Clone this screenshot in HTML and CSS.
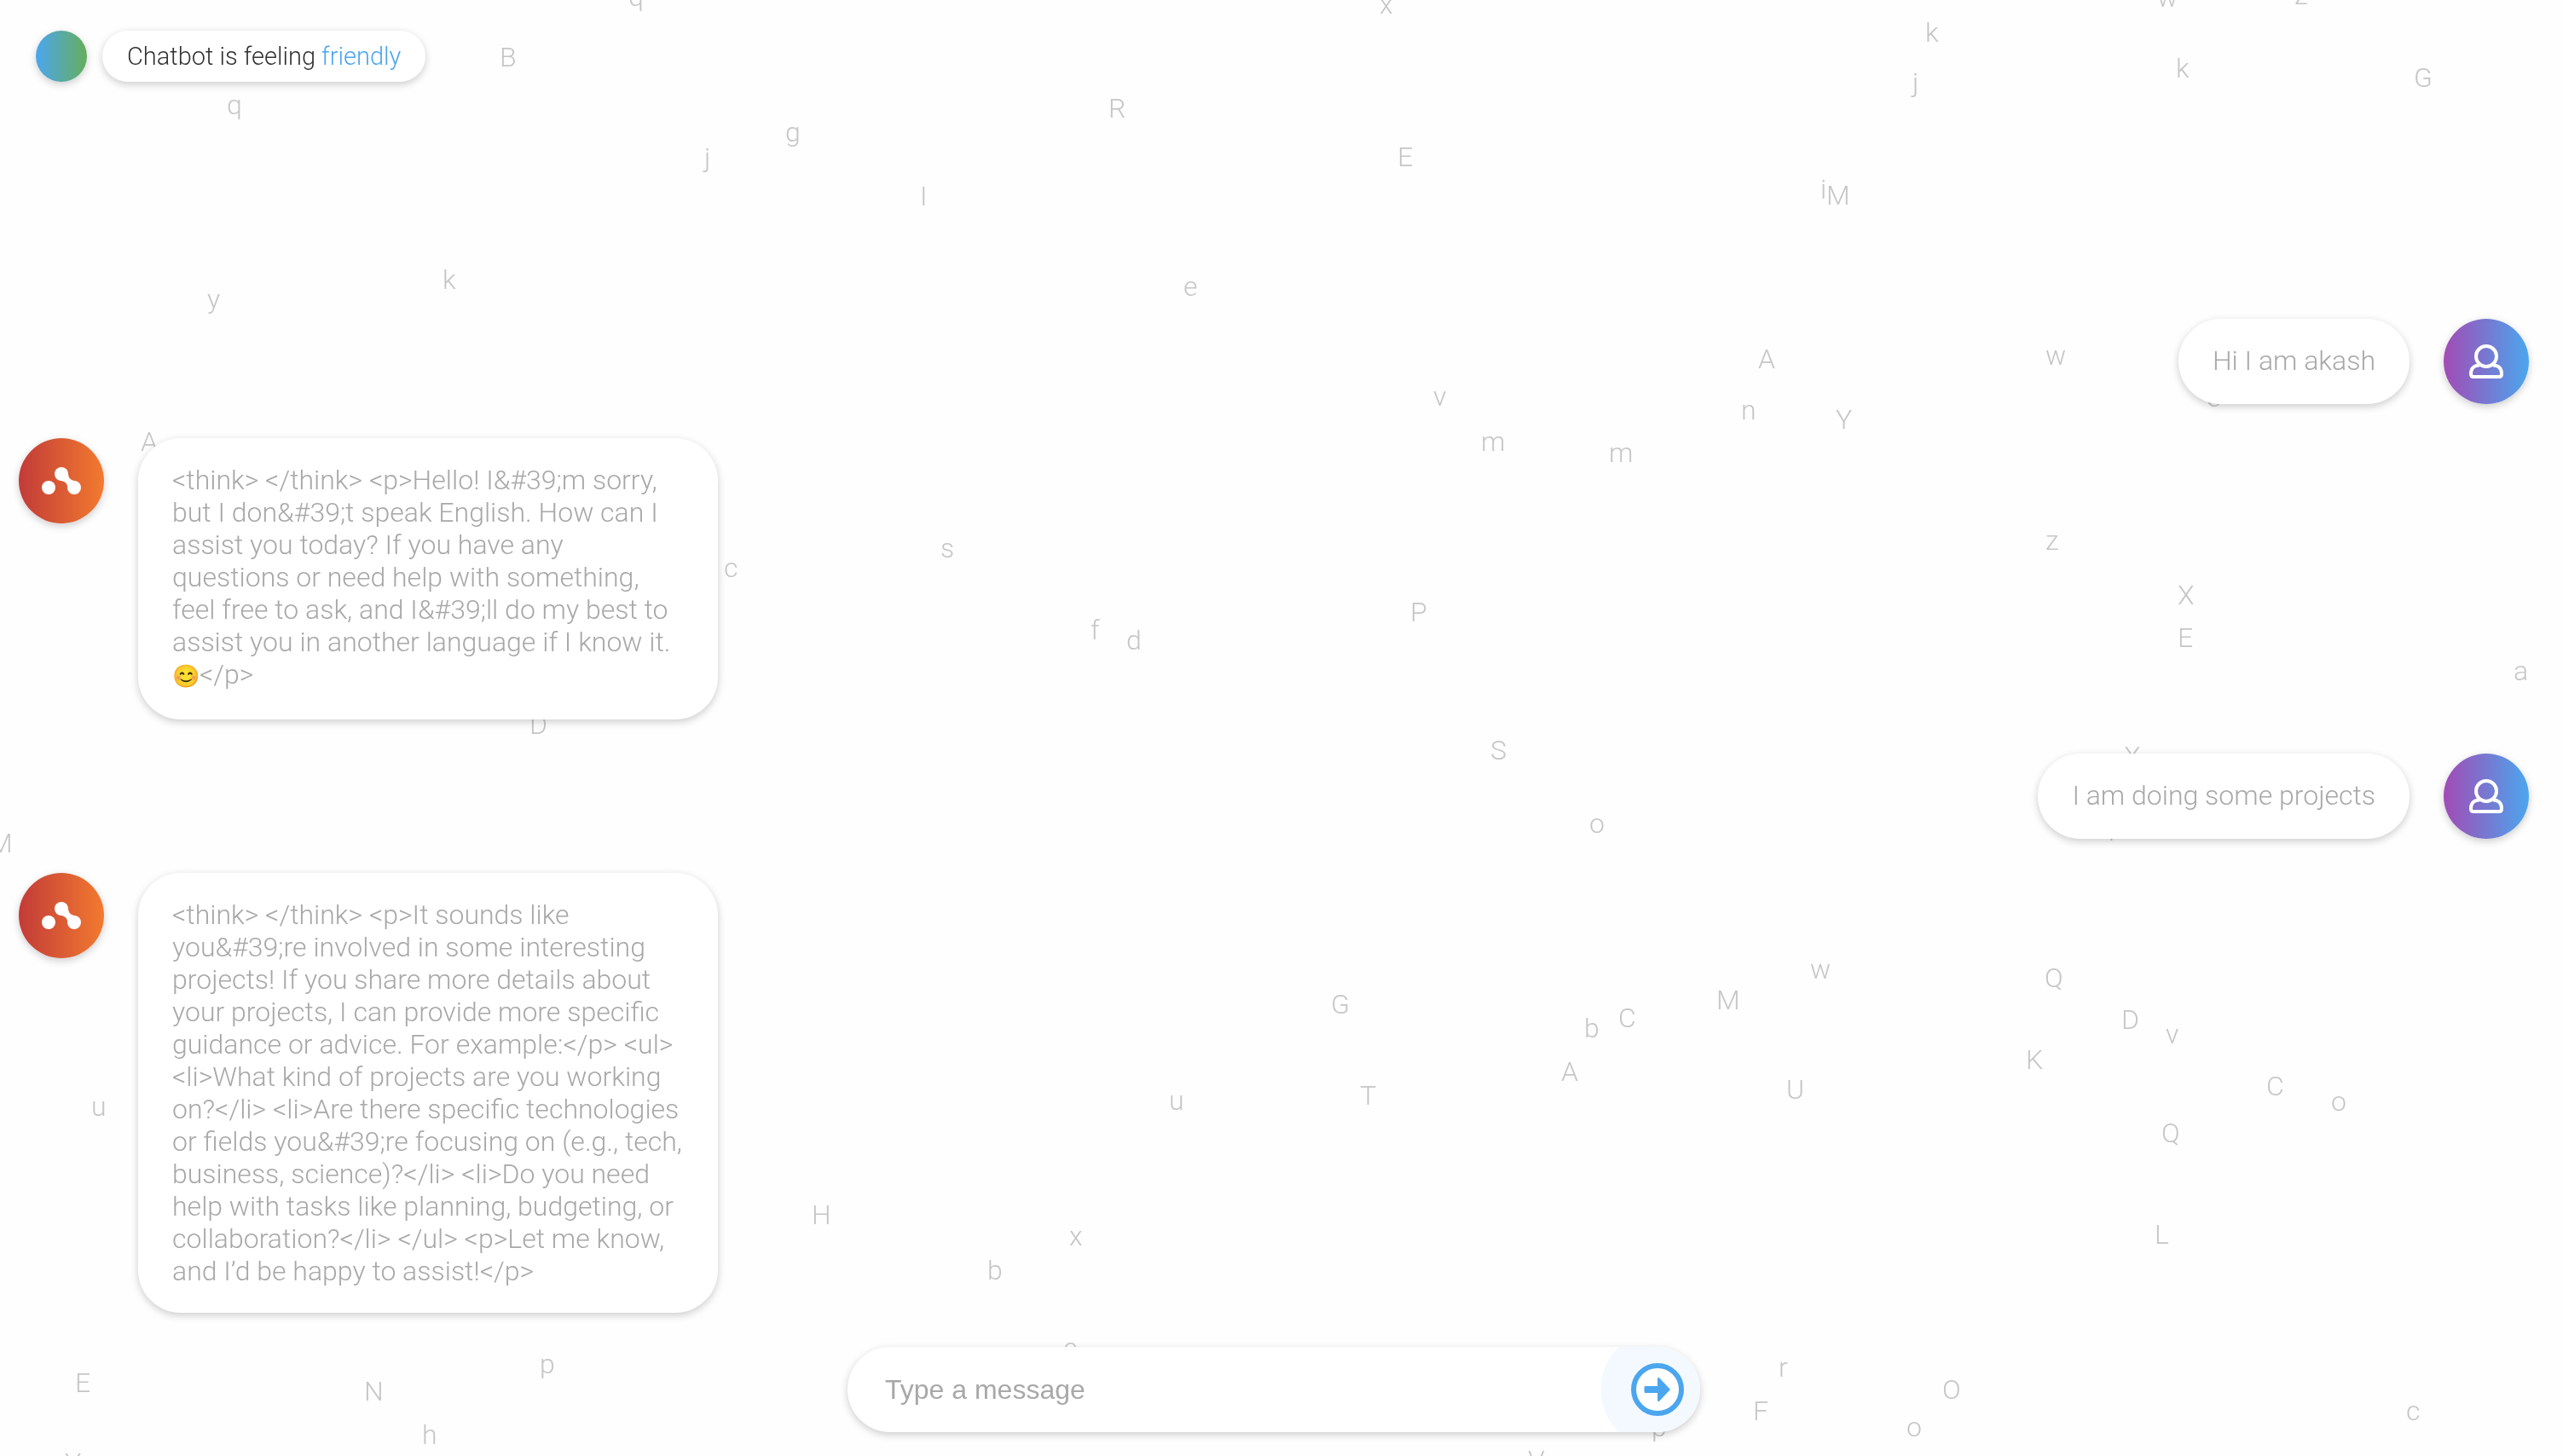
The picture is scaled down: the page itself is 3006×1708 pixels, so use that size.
FILE: index.html
```html
<!DOCTYPE html>
<html lang="en">
<head>
<meta charset="utf-8">
<meta name="viewport" content="width=device-width, initial-scale=1">
<title>Chatbot</title>
<link rel="stylesheet" href="styles.css">
</head>
<body>
<svg class="sprite" aria-hidden="true">
  <symbol id="icon-bot" viewBox="0 0 100 100">
    <g fill="#fff">
      <circle cx="35" cy="58" r="8"/>
      <circle cx="50" cy="42" r="8"/>
      <circle cx="65" cy="58" r="8"/>
      <path d="M58 41C58 46 60.500 49.500 66 50L58 61C57.500 54 55 50.500 49 50Z"/>
    </g>
  </symbol>
  <symbol id="icon-user" viewBox="0 0 100 100">
    <g fill="none" stroke="#fff" stroke-width="4" stroke-linejoin="round">
      <circle cx="50" cy="44" r="12"/>
      <path d="M42 54.500C36 54.500 32 58 32 64.500C32 67 33 68 35 68H65C67 68 68 67 68 64.500C68 58 64 54.500 58 54.500"/>
    </g>
  </symbol>
</svg>

<div class="letters" aria-hidden="true">
  <span style="left:737px;top:-23px">q</span>
  <span style="left:1618px;top:-14px">x</span>
  <span style="left:2530px;top:-22px">w</span>
  <span style="left:2691px;top:-25px">z</span>
  <span style="left:266px;top:104px">q</span>
  <span style="left:586px;top:48px">B</span>
  <span style="left:519px;top:309px">k</span>
  <span style="left:243px;top:332px">y</span>
  <span style="left:1300px;top:108px">R</span>
  <span style="left:921px;top:136px">g</span>
  <span style="left:826px;top:166px">j</span>
  <span style="left:1079px;top:211px">I</span>
  <span style="left:1639px;top:165px">E</span>
  <span style="left:1388px;top:317px">e</span>
  <span style="left:2258px;top:19px">k</span>
  <span style="left:2243px;top:78px">j</span>
  <span style="left:2552px;top:61px">k</span>
  <span style="left:2831px;top:72px">G</span>
  <span style="left:2135px;top:203px">i</span>
  <span style="left:2142px;top:210px">M</span>
  <span style="left:165px;top:499px">A</span>
  <span style="left:849px;top:647px">c</span>
  <span style="left:621px;top:831px">D</span>
  <span style="left:1103px;top:624px">s</span>
  <span style="left:1279px;top:720px">f</span>
  <span style="left:1321px;top:732px">d</span>
  <span style="left:-13px;top:970px">M</span>
  <span style="left:107px;top:1279px">u</span>
  <span style="left:1371px;top:1272px">u</span>
  <span style="left:952px;top:1406px">H</span>
  <span style="left:1254px;top:1431px">x</span>
  <span style="left:1158px;top:1471px">b</span>
  <span style="left:88px;top:1603px">E</span>
  <span style="left:427px;top:1613px">N</span>
  <span style="left:633px;top:1581px">p</span>
  <span style="left:495px;top:1664px">h</span>
  <span style="left:76px;top:1697px">Y</span>
  <span style="left:1247px;top:1562px">e</span>
  <span style="left:2062px;top:402px">A</span>
  <span style="left:2399px;top:398px">w</span>
  <span style="left:1681px;top:446px">v</span>
  <span style="left:2042px;top:462px">n</span>
  <span style="left:2153px;top:473px">Y</span>
  <span style="left:1737px;top:499px">m</span>
  <span style="left:1887px;top:512px">m</span>
  <span style="left:2588px;top:447px">e</span>
  <span style="left:2399px;top:615px">z</span>
  <span style="left:1654px;top:699px">P</span>
  <span style="left:2554px;top:679px">X</span>
  <span style="left:2554px;top:729px">E</span>
  <span style="left:2948px;top:768px">a</span>
  <span style="left:1748px;top:861px">S</span>
  <span style="left:1864px;top:947px">o</span>
  <span style="left:2491px;top:868px">X</span>
  <span style="left:2473px;top:950px">p</span>
  <span style="left:1561px;top:1159px">G</span>
  <span style="left:1858px;top:1187px">b</span>
  <span style="left:1898px;top:1175px">C</span>
  <span style="left:2013px;top:1154px">M</span>
  <span style="left:2123px;top:1118px">w</span>
  <span style="left:2398px;top:1128px">Q</span>
  <span style="left:2488px;top:1177px">D</span>
  <span style="left:2540px;top:1194px">v</span>
  <span style="left:2376px;top:1224px">K</span>
  <span style="left:1831px;top:1238px">A</span>
  <span style="left:1595px;top:1266px">T</span>
  <span style="left:2095px;top:1259px">U</span>
  <span style="left:2658px;top:1255px">C</span>
  <span style="left:2734px;top:1273px">o</span>
  <span style="left:2535px;top:1310px">Q</span>
  <span style="left:2527px;top:1429px">L</span>
  <span style="left:2086px;top:1585px">r</span>
  <span style="left:2056px;top:1636px">F</span>
  <span style="left:2278px;top:1611px">O</span>
  <span style="left:2236px;top:1655px">o</span>
  <span style="left:2822px;top:1636px">c</span>
  <span style="left:1937px;top:1655px">p</span>
  <span style="left:1792px;top:1694px">V</span>
</div>

<div class="chat">
  <header class="status">
    <span class="status-dot"></span>
    <p class="status-text">Chatbot is feeling <span class="mood">friendly</span></p>
  </header>

  <main class="messages">
    <article class="message message-user">
      <p class="bubble">Hi I am akash</p>
      <svg class="avatar avatar-user" role="img" aria-label="You"><use href="#icon-user"/></svg>
    </article>
    <article class="message">
      <svg class="avatar avatar-bot" role="img" aria-label="Chatbot"><use href="#icon-bot"/></svg>
      <p class="bubble">&lt;think&gt; &lt;/think&gt; &lt;p&gt;Hello! I&amp;#39;m sorry, but I don&amp;#39;t speak English. How can I assist you today? If you have any questions or need help with something, feel free to ask, and I&amp;#39;ll do my best to assist you in another language if I know it. <span class="emoji">😊</span>&lt;/p&gt;</p>
    </article>
    <article class="message message-user">
      <p class="bubble">I am doing some projects</p>
      <svg class="avatar avatar-user" role="img" aria-label="You"><use href="#icon-user"/></svg>
    </article>
    <article class="message">
      <svg class="avatar avatar-bot" role="img" aria-label="Chatbot"><use href="#icon-bot"/></svg>
      <p class="bubble">&lt;think&gt; &lt;/think&gt; &lt;p&gt;It sounds like you&amp;#39;re involved in some interesting projects! If you share more details about your projects, I can provide more specific guidance or advice. For example:&lt;/p&gt; &lt;ul&gt; &lt;li&gt;What kind of projects are you working on?&lt;/li&gt; &lt;li&gt;Are there specific technologies or fields you&amp;#39;re focusing on (e.g., tech, business, science)?&lt;/li&gt; &lt;li&gt;Do you need help with tasks like planning, budgeting, or collaboration?&lt;/li&gt; &lt;/ul&gt; &lt;p&gt;Let me know, and I’d be happy to assist!&lt;/p&gt;</p>
    </article>
  </main>

  <form class="composer">
    <input class="composer-input" type="text" placeholder="Type a message" aria-label="Type a message">
    <button class="composer-send" type="button" aria-label="Send">
      <svg class="send-icon" viewBox="0 0 62 62" aria-hidden="true">
        <circle cx="31" cy="31" r="28" fill="#fff" stroke="#4ba6ee" stroke-width="6"/>
        <path d="M17 27H31V18.500C31 17 32.200 16.500 33.300 17.600L46 31L33.300 44.400C32.200 45.500 31 45 31 43.500V35H17C16.200 35 15.500 34.500 15.500 33.500V28.500C15.500 27.500 16.200 27 17 27Z" fill="#4ba6ee"/>
      </svg>
    </button>
  </form>
</div>
</body>
</html>
```
FILE: styles.css
```css
* {
  box-sizing: border-box;
}

body {
  margin: 0;
  background: #fefefe;
  color: #333;
  font-family: Roboto, "Noto Sans", sans-serif;
  font-size: 32px;
  font-weight: 300;
  line-height: 38px;
}

p {
  margin: 0;
}

.sprite {
  display: none;
}

.letters {
  position: fixed;
  inset: 0;
  overflow: hidden;
  color: #c6c6c6;
}

.letters span {
  position: absolute;
}

.chat {
  position: relative;
  display: flex;
  flex-direction: column;
  min-height: 100vh;
  padding: 36px 40px 28px 22px;
}

.status {
  display: flex;
  align-items: center;
  gap: 18px;
  padding-left: 20px;
}

.status-dot,
.status-text,
.avatar,
.bubble,
.composer {
  box-shadow: 0 3px 10px rgba(0, 0, 0, 0.2);
}

.status-dot {
  width: 60px;
  height: 60px;
  border-radius: 50%;
  background: linear-gradient(90deg, #4ba6ee, #66ae5c);
}

.status-text {
  padding: 0 29px;
  border-radius: 30px;
  background: #fff;
  font-size: 29px;
  line-height: 60px;
}

.mood {
  color: #4ba6ee;
}

.messages {
  flex: 1;
  display: flex;
  flex-direction: column;
  justify-content: flex-end;
  gap: 40px;
  padding: 40px 0;
}

.message {
  display: flex;
  align-items: flex-start;
  gap: 40px;
}

.message-user {
  justify-content: flex-end;
}

.avatar {
  flex: none;
  width: 100px;
  height: 100px;
  border-radius: 50%;
}

.avatar-bot {
  background: linear-gradient(90deg, #c23b38, #f27a2f);
}

.avatar-user {
  background: linear-gradient(90deg, #a24bb5, #4ba6ee);
}

.bubble {
  max-width: 680px;
  padding: 30px 40px;
  border-radius: 50px;
  background: #fff;
  color: #a8a8a8;
}

.message-user .bubble {
  padding: 30px 40px 32px;
}

.emoji {
  display: inline-block;
  font-size: 26px;
  line-height: 42px;
}

.composer {
  display: flex;
  align-self: center;
  width: 100%;
  max-width: 1000px;
  height: 100px;
  overflow: hidden;
  border-radius: 50px;
  background: #fff;
}

.composer-input {
  flex: 1;
  min-width: 0;
  padding: 0 0 0 44px;
  border: 0;
  outline: 0;
  background: none;
  color: #333;
  font: 32px "Liberation Sans", Arial, sans-serif;
}

.composer-input::placeholder {
  color: #a8a8a8;
}

.composer-send {
  display: flex;
  align-items: center;
  justify-content: flex-end;
  width: 117px;
  padding: 0 19px 0 0;
  border: 0;
  background: radial-gradient(circle at 70px 50%, #f3f9fe 69px, transparent 70px);
  cursor: pointer;
}

.send-icon {
  width: 62px;
  height: 62px;
}
```
